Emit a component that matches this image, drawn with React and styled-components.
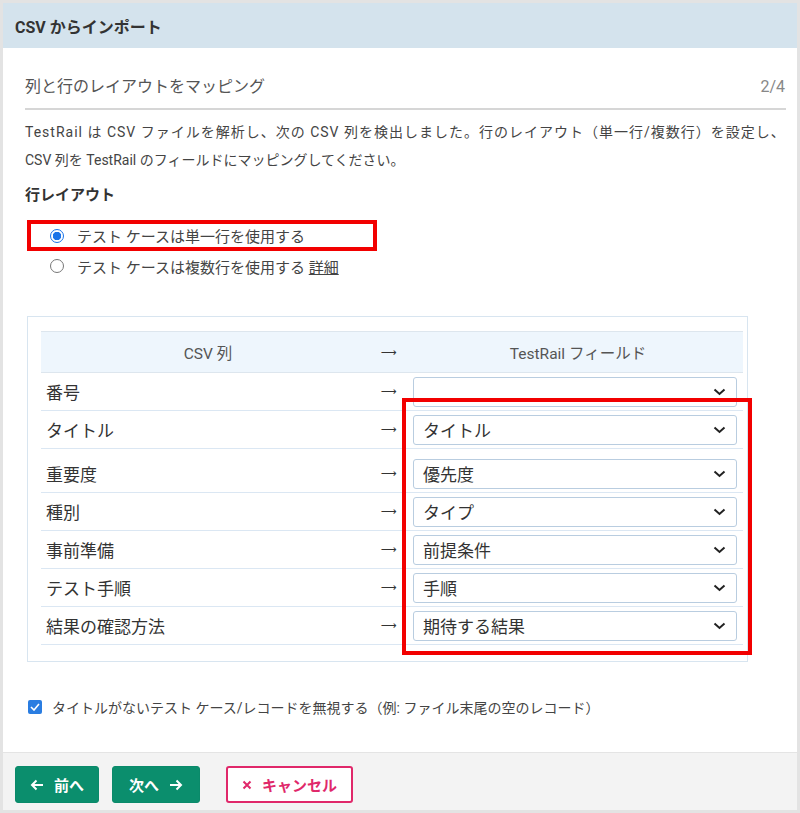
import React from "react";
import styled, { createGlobalStyle } from "styled-components";

const GlobalStyle = createGlobalStyle`
  html, body {
    margin: 0;
    padding: 0;
    background: #ffffff;
  }
  * {
    box-sizing: border-box;
  }
`;

const FONT = `Roboto, "Noto Sans CJK JP", sans-serif`;

const Dialog = styled.div`
  width: 800px;
  height: 813px;
  border: 3px solid #e3e3e3;
  display: flex;
  flex-direction: column;
  font-family: ${FONT};
  color: #444;
  background: #fff;
`;

const Header = styled.div`
  height: 45px;
  flex-shrink: 0;
  background: #d4e3ed;
  display: flex;
  align-items: center;
  padding-left: 12px;
  font-size: 16px;
  font-weight: 700;
  color: #333;
`;

const Body = styled.div`
  flex: 1;
  padding: 28px 11px 0 22px;
  display: flex;
  flex-direction: column;
`;

const StepRow = styled.div`
  display: flex;
  justify-content: space-between;
  align-items: center;
  height: 34px;
  padding-bottom: 10px;
  line-height: 24px;
  border-bottom: 2px solid #d6d6d6;
  font-size: 16px;
  color: #555;
`;

const StepCount = styled.span`
  color: #888;
  font-size: 16px;
  padding-right: 1px;
`;

const Intro = styled.p`
  margin: 8px 0 0;
  font-size: 14px;
  line-height: 28px;
  color: #444;
`;

const WideLine = styled.span`
  letter-spacing: 1px;
`;

const SectionTitle = styled.div`
  margin-top: 8px;
  font-size: 15px;
  font-weight: 700;
  line-height: 26px;
  color: #333;
`;

const RadioRow = styled.label`
  display: flex;
  align-items: center;
  gap: 13px;
  width: 350px;
  height: ${(p) => (p.highlight ? "31px" : "26px")};
  margin-left: 2px;
  margin-top: ${(p) => (p.highlight ? "12px" : "2px")};
  padding-left: ${(p) => (p.highlight ? "19px" : "23px")};
  border: ${(p) => (p.highlight ? "4px solid #f20000" : "none")};
  font-size: 15px;
  color: #444;
`;

const RadioDot = styled.span`
  width: 14px;
  height: 14px;
  border-radius: 50%;
  flex-shrink: 0;
  border: 1px solid ${(p) => (p.checked ? "#1a73e8" : "#777")};
  background: ${(p) =>
    p.checked ? "radial-gradient(circle, #1a73e8 0 4px, #fff 4.5px)" : "#fff"};
`;

const DetailLink = styled.span`
  text-decoration: underline;
  color: #444;
`;

const MappingBox = styled.div`
  position: relative;
  margin-top: 37px;
  margin-left: 2px;
  width: 721px;
  border: 1px solid #d8e5f0;
  padding: 14px 4px 16px 13px;
`;

const Table = styled.div`
  display: flex;
  flex-direction: column;
`;

const HeadRow = styled.div`
  display: grid;
  grid-template-columns: 334px 38px 1fr;
  height: 42px;
  align-items: center;
  background: #eef6fd;
  border-top: 1px solid #dde6ee;
  border-bottom: 1px solid #dde6ee;
  color: #555;
  font-size: 15.5px;
`;

const HeadCell = styled.div`
  text-align: center;
`;

const Row = styled.div`
  display: grid;
  grid-template-columns: 334px 38px 1fr;
  height: 38px;
  align-items: center;
  border-bottom: 1px solid #dbe7f3;
  margin-top: ${(p) => (p.spaced ? "6px" : "0")};
`;

const FieldName = styled.div`
  padding-left: 5px;
  font-size: 17px;
  color: #333;
`;

const Arrow = styled.div`
  font-family: "DejaVu Sans", sans-serif;
  font-size: 11px;
  color: #333;
  padding-left: 6px;
`;

const Select = styled.div`
  height: 30px;
  margin-right: 6px;
  border: 1px solid #b9cde0;
  border-radius: 3px;
  display: flex;
  align-items: center;
  justify-content: space-between;
  padding: 0 10px 0 9px;
  font-size: 17px;
  color: #333;
  background: #fff;
`;

const Highlight = styled.div`
  position: absolute;
  left: 374px;
  top: 81px;
  width: 350px;
  height: 257px;
  border: 4px solid #f20000;
  pointer-events: none;
`;

const CheckRow = styled.label`
  display: flex;
  align-items: center;
  gap: 10px;
  margin-top: 33px;
  margin-left: 3px;
  height: 24px;
  font-size: 14px;
  color: #444;
`;

const CheckBox = styled.span`
  width: 14px;
  height: 14px;
  border-radius: 2px;
  background: #2a7de1;
  display: flex;
  align-items: center;
  justify-content: center;
`;

const Footer = styled.div`
  height: 58px;
  flex-shrink: 0;
  background: #f3f3f3;
  border-top: 1px solid #e4e4e4;
  display: flex;
  align-items: flex-start;
  padding: 13px 0 0 12px;
  gap: 13px;
`;

const Button = styled.button`
  height: 37px;
  padding: 0 ${(p) => p.pad || "14px"};
  border-radius: 3px;
  border: ${(p) => (p.danger ? "2px solid #e0286a" : "1px solid #0a8a6a")};
  background: ${(p) => (p.danger ? "#fff" : "#0b8e6d")};
  color: ${(p) => (p.danger ? "#e0286a" : "#fff")};
  margin-left: ${(p) => (p.danger ? "13px" : "0")};
  font-family: ${FONT};
  font-size: 15px;
  font-weight: 700;
  display: flex;
  align-items: center;
  gap: 10px;
`;

const Chevron = () => (
  <svg width="13" height="8" viewBox="0 0 13 8">
    <path d="M1.5 1.5 L6.5 6 L11.5 1.5" fill="none" stroke="#222" strokeWidth="2" />
  </svg>
);

const ArrowIcon = ({ dir }) => (
  <svg width="14" height="12" viewBox="0 0 14 12">
    {dir === "left" ? (
      <path d="M13 6 H2 M6.5 1.5 L2 6 L6.5 10.5" fill="none" stroke="#fff" strokeWidth="2" />
    ) : (
      <path d="M1 6 H12 M7.5 1.5 L12 6 L7.5 10.5" fill="none" stroke="#fff" strokeWidth="2" />
    )}
  </svg>
);

const rows = [
  { csv: "番号", field: "" },
  { csv: "タイトル", field: "タイトル" },
  { csv: "重要度", field: "優先度", spaced: true },
  { csv: "種別", field: "タイプ" },
  { csv: "事前準備", field: "前提条件" },
  { csv: "テスト手順", field: "手順" },
  { csv: "結果の確認方法", field: "期待する結果" },
];

export default function App() {
  return (
    <>
      <GlobalStyle />
      <Dialog>
        <Header>CSV からインポート</Header>
        <Body>
          <StepRow>
            <span>列と行のレイアウトをマッピング</span>
            <StepCount>2/4</StepCount>
          </StepRow>
          <Intro>
            <WideLine>
              TestRail は CSV ファイルを解析し、次の CSV 列を検出しました。行のレイアウト（単一行/複数行）を設定し、
            </WideLine>
            <br />
            CSV 列を TestRail のフィールドにマッピングしてください。
          </Intro>
          <SectionTitle>行レイアウト</SectionTitle>
          <RadioRow highlight>
            <RadioDot checked />
            テスト ケースは単一行を使用する
          </RadioRow>
          <RadioRow>
            <RadioDot />
            <span>
              テスト ケースは複数行を使用する <DetailLink>詳細</DetailLink>
            </span>
          </RadioRow>

          <MappingBox>
            <Table>
              <HeadRow>
                <HeadCell>CSV 列</HeadCell>
                <Arrow>⟶</Arrow>
                <HeadCell>TestRail フィールド</HeadCell>
              </HeadRow>
              {rows.map((r) => (
                <Row key={r.csv} spaced={r.spaced}>
                  <FieldName>{r.csv}</FieldName>
                  <Arrow>⟶</Arrow>
                  <Select>
                    <span>{r.field}</span>
                    <Chevron />
                  </Select>
                </Row>
              ))}
            </Table>
            <Highlight />
          </MappingBox>

          <CheckRow>
            <CheckBox>
              <svg width="10" height="8" viewBox="0 0 10 8">
                <path d="M1 4 L4 7 L9 1" fill="none" stroke="#fff" strokeWidth="1.6" />
              </svg>
            </CheckBox>
            タイトルがないテスト ケース/レコードを無視する（例: ファイル末尾の空のレコード）
          </CheckRow>
        </Body>
        <Footer>
          <Button>
            <ArrowIcon dir="left" />
            前へ
          </Button>
          <Button pad="16px">
            次へ
            <ArrowIcon dir="right" />
          </Button>
          <Button danger pad="14px">
            <svg width="10" height="10" viewBox="0 0 10 10">
              <path d="M1.5 1.5 L8.5 8.5 M8.5 1.5 L1.5 8.5" stroke="#e0286a" strokeWidth="2" />
            </svg>
            キャンセル
          </Button>
        </Footer>
      </Dialog>
    </>
  );
}
